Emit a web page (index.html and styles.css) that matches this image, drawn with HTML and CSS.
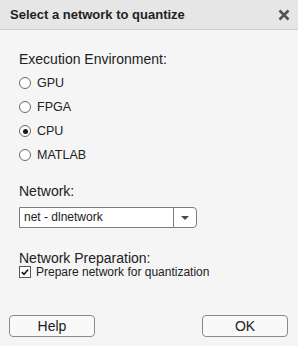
FILE: index.html
```html
<!DOCTYPE html>
<html lang="en">
<head>
  <meta charset="UTF-8" />
  <title>Select a network to quantize</title>
  <link rel="stylesheet" href="styles.css">
</head>
<body>

  <div class="dialog">
    <div class="titlebar">
      <span class="title">Select a network to quantize</span>
      <svg class="close" viewBox="0 0 12 12" xmlns="http://www.w3.org/2000/svg">
        <path d="M1.5 1.5 L10.5 10.5 M10.5 1.5 L1.5 10.5"/>
      </svg>
    </div>

    <div class="content">
      <div class="label">Execution Environment:</div>

      <div class="option"><span class="radio"></span>GPU</div>
      <div class="option"><span class="radio"></span>FPGA</div>
      <div class="option"><span class="radio checked"></span>CPU</div>
      <div class="option"><span class="radio"></span>MATLAB</div>

      <div class="label net-label">Network:</div>
      <div class="dropdown">
        <span class="dropdown-value">net - dlnetwork</span>
        <span class="dropdown-btn">
          <svg class="caret" viewBox="0 0 8 4" xmlns="http://www.w3.org/2000/svg">
            <path d="M0 0 L8 0 L4 4 Z"/>
          </svg>
        </span>
      </div>

      <div class="label prep-label">Network Preparation:</div>
      <div class="check-row">
        <span class="checkbox">
          <svg viewBox="0 0 12 12" xmlns="http://www.w3.org/2000/svg">
            <path d="M2.2 6.2 L4.8 8.8 L9.8 3"/>
          </svg>
        </span>
        Prepare network for quantization
      </div>
    </div>

    <div class="footer">
      <button class="btn">Help</button>
      <button class="btn">OK</button>
    </div>
  </div>

</body>
</html>
```

FILE: styles.css
```css
body {
  margin: 0;
  background-color: #f5f5f5;
  font-family: "Liberation Sans", Arial, sans-serif;
  font-size: 12px;
  color: #212121;
}

.dialog {
  width: 298px;
  height: 346px;
  display: flex;
  flex-direction: column;
  box-sizing: border-box;
}

.titlebar {
  height: 29px;
  background-color: #e6e6e6;
  border-bottom: 1px solid #cfcfcf;
  display: flex;
  align-items: center;
  justify-content: space-between;
  padding: 0 8px 0 10px;
}

.title {
  font-weight: bold;
  font-size: 13px;
  color: #1f1f1f;
}

.close {
  width: 12px;
  height: 12px;
  stroke: #555;
  stroke-width: 2.6;
  fill: none;
}

.content {
  padding: 17px 19px 0 19px;
  display: flex;
  flex-direction: column;
}

.label {
  height: 24px;
  line-height: 24px;
  font-size: 14px;
}

.option {
  height: 24px;
  display: flex;
  align-items: center;
  gap: 6px;
  font-size: 12.5px;
}

.radio {
  width: 12px;
  height: 12px;
  box-sizing: border-box;
  border: 1px solid #6a6a6a;
  border-radius: 50%;
  background-color: #fff;
  display: flex;
  align-items: center;
  justify-content: center;
}

.radio.checked::after {
  content: "";
  width: 5px;
  height: 5px;
  border-radius: 50%;
  background-color: #1a1a1a;
}

.net-label {
  margin-top: 12px;
}

.dropdown {
  margin-top: 4px;
  width: 178px;
  height: 21px;
  box-sizing: border-box;
  border: 1px solid #7d7d7d;
  border-radius: 0 4px 4px 0;
  background-color: #fff;
  display: flex;
}

.dropdown-value {
  flex: 1;
  padding-left: 4px;
  line-height: 19px;
}

.dropdown-btn {
  width: 22px;
  border-left: 1px solid #7d7d7d;
  display: flex;
  align-items: center;
  justify-content: center;
}

.caret {
  width: 8px;
  height: 4px;
  fill: #4a4a4a;
}

.prep-label {
  margin-top: 23px;
  height: 14px;
  line-height: 14px;
}

.check-row {
  margin-top: 1px;
  height: 11px;
  display: flex;
  align-items: center;
  gap: 5px;
}

.checkbox {
  width: 12px;
  height: 12px;
  flex-shrink: 0;
  box-sizing: border-box;
  border: 1px solid #5a5a5a;
  background-color: #fff;
  display: flex;
}

.checkbox svg {
  width: 10px;
  height: 10px;
  stroke: #1a1a1a;
  stroke-width: 1.9;
  fill: none;
}

.footer {
  margin-top: auto;
  margin-bottom: 9px;
  padding: 0 10px 0 9px;
  display: flex;
  justify-content: space-between;
}

.btn {
  width: 86px;
  height: 22px;
  border: 1px solid #8a8a8a;
  border-radius: 4px;
  background-color: #f9f9f9;
  font-family: "Liberation Sans", Arial, sans-serif;
  font-size: 14px;
  color: #212121;
  padding: 0;
}
```
